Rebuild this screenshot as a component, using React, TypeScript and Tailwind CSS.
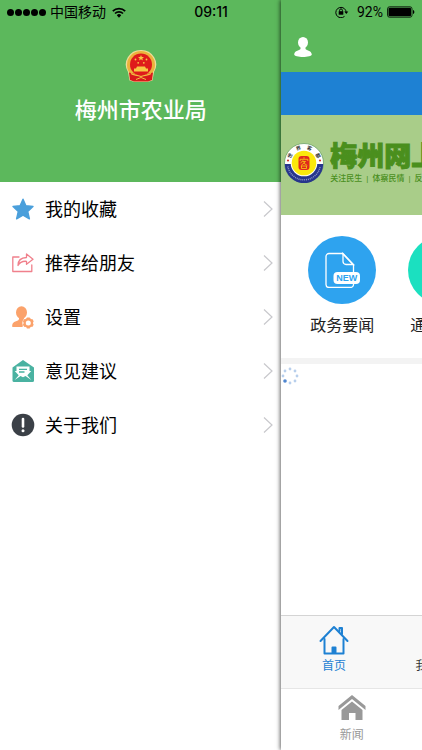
import type { ReactNode } from "react";

type MenuItem = {
  label: string;
  icon: ReactNode;
};

const StarIcon = () => (
  <svg viewBox="0 0 24 24" className="size-6" fill="#4a9fdb">
    <path
      d="M12 2.2l2.9 6.6 7.1.7-5.3 4.9 1.7 7.4-6.4-3.6-6.4 3.6 1.7-7.4L2 9.5l7.1-.7z"
      stroke="#4a9fdb"
      strokeWidth="1.4"
      strokeLinejoin="round"
    />
  </svg>
);

const ShareIcon = () => (
  <svg
    viewBox="0 0 24 24"
    className="size-6"
    fill="none"
    stroke="#f0808c"
    strokeWidth="1.3"
    strokeLinejoin="round"
    strokeLinecap="round"
  >
    <path d="M8 6H1.800v14.500h19V14" />
    <path d="M7 14.500c0-5 3-7.800 8.500-8V3l6.500 5.300-6.500 5v-3C11 10 8.500 11.500 7 14.500z" />
  </svg>
);

const UserSettingsIcon = () => (
  <svg viewBox="0 0 24 24" className="size-6">
    <g fill="#fba26b">
      <ellipse cx="10.5" cy="7.5" rx="5.5" ry="6.300" />
      <path d="M8 12h5v3l-1.500 7H1.300c-.6-3 .9-5 3.700-5.800 2-.6 3-1.400 3-2.200z" />
    </g>
    <circle cx="17.300" cy="18" r="6" fill="#fff" />
    <circle
      cx="17.300"
      cy="18"
      r="3.700"
      fill="none"
      stroke="#fba26b"
      strokeWidth="2.400"
    />
    <path
      d="M17.300 12.500v1.500M17.300 22v1.500M12.500 15.200l1.400.8M20.700 20l1.400.8M12.500 20.800l1.400-.8M20.700 16l1.400-.8"
      stroke="#fba26b"
      strokeWidth="3"
    />
  </svg>
);

const FeedbackIcon = () => (
  <svg viewBox="0 0 24 24" className="size-6">
    <path
      d="M12 1l11 7.500v13a1.500 1.500 0 0 1-1.500 1.500H3a1.500 1.500 0 0 1-1.500-1.500v-13z"
      fill="#4ab2a1"
    />
    <path
      d="M5.500 7.500h13V12h1.800l-4 4.300 4 4.700-5.800-4-2.500 1.300L9.500 17l-5.800 4 4-4.700-4-4.300h1.800z"
      fill="#fff"
    />
    <path d="M8 10.300h8M8 13h5.500" stroke="#4ab2a1" strokeWidth="1.300" />
  </svg>
);

const AboutIcon = () => (
  <svg viewBox="0 0 24 24" className="size-6">
    <circle cx="12" cy="12" r="11.300" fill="#3b4047" />
    <path
      d="M12 6v7.500"
      stroke="#fff"
      strokeWidth="2.600"
      strokeLinecap="round"
    />
    <circle cx="12" cy="17.800" r="1.500" fill="#fff" />
  </svg>
);

const ChevronIcon = () => (
  <svg
    viewBox="0 0 10 18"
    className="h-[18px] w-[10px]"
    fill="none"
    stroke="#c8c8cc"
    strokeWidth="1.2"
  >
    <path d="M1 1.500l8 7.500-8 7.500" />
  </svg>
);

const Emblem = () => (
  <svg viewBox="0 0 34 34" className="size-[34px]">
    <path
      d="M17 1a15 14.500 0 0 1 13 22l-1.500 8.500-5 1.500h-13l-5-1.500L4 23A15 14.500 0 0 1 17 1z"
      fill="#f0dc9a"
    />
    <circle cx="17" cy="16" r="14" fill="#ecb33c" />
    <path d="M5 23.500l8 2h8l8-2-1 7.500-4 1.500H10L6 31z" fill="#d8191b" />
    <circle cx="17" cy="15.500" r="11" fill="#df1b1b" />
    <path
      d="M17 6l.8 2 2.200.1-1.700 1.300.6 2.100-1.900-1.200-1.900 1.200.6-2.100L14 8.100l2.200-.1z"
      fill="#f7c744"
    />
    <g fill="#f7c744">
      <circle cx="11.500" cy="10.500" r=".9" />
      <circle cx="22.500" cy="10.500" r=".9" />
      <circle cx="14.200" cy="13.800" r=".9" />
      <circle cx="19.800" cy="13.800" r=".9" />
      <path d="M13 17.500h8l1 2h2V22.500H10v-3h2z" />
    </g>
    <path
      d="M7 24.500c3 2 5 1 10 3 5-2 7-1 10-3"
      stroke="#f3bd42"
      strokeWidth="1.300"
      fill="none"
    />
    <path d="M12 30.500l5-2 5 2" stroke="#f3bd42" strokeWidth="1" fill="none" />
  </svg>
);

const menu: MenuItem[] = [
  { label: "我的收藏", icon: <StarIcon /> },
  { label: "推荐给朋友", icon: <ShareIcon /> },
  { label: "设置", icon: <UserSettingsIcon /> },
  { label: "意见建议", icon: <FeedbackIcon /> },
  { label: "关于我们", icon: <AboutIcon /> },
];

const StatusBar = () => (
  <div className="absolute inset-x-0 top-0 z-20 grid h-6 grid-cols-3 items-center px-[7px] text-black">
    <div className="flex items-center">
      <div className="flex gap-[1px]">
        {[0, 1, 2, 3, 4].map((dot) => (
          <span key={dot} className="size-[7px] rounded-full bg-black" />
        ))}
      </div>
      <span className="ml-1 text-sm leading-6 whitespace-nowrap">中国移动</span>
      <svg
        viewBox="0 0 14 11"
        className="ml-[6px] h-[11px] w-[14px] shrink-0"
        fill="none"
        stroke="#000"
        strokeWidth="1.7"
      >
        <path d="M.8 4.100a8.800 8.800 0 0 1 12.400 0" />
        <path d="M3 6.500a5.700 5.700 0 0 1 8 0" />
        <path d="M4.800 8.200a3.100 3.100 0 0 1 4.400 0L7 10.700z" fill="#000" stroke="none" />
      </svg>
    </div>
    <span className="text-center font-[Inter,sans-serif] text-sm font-medium">
      09:11
    </span>
    <div className="flex items-center justify-end">
      <svg
        viewBox="0 0 14 12"
        className="h-3 w-[14px]"
        fill="none"
        stroke="#000"
        strokeWidth="1"
      >
        <path d="M9.500 10.400A5.200 5.200 0 1 1 11.200 6.500" />
        <path d="M9.300 5.500h4l-2 2.500z" fill="#000" stroke="none" />
        <path d="M4.600 5.500V4.300a1.400 1.400 0 0 1 2.800 0v1.200" />
        <rect x="3.700" y="5.200" width="4.600" height="3.500" fill="#000" stroke="none" />
      </svg>
      <span className="mr-1 ml-2 font-[Roboto,sans-serif] text-sm">92%</span>
      <svg viewBox="0 0 28 12" className="h-3 w-7">
        <rect x=".5" y=".8" width="24.500" height="10.400" rx="2" fill="none" stroke="#000" strokeWidth=".8" />
        <rect x="1.500" y="1.800" width="22.500" height="8.400" rx="1" fill="#000" />
        <path d="M26 4c1.800.5 1.800 3.500 0 4z" fill="#000" />
      </svg>
    </div>
  </div>
);

const Sidebar = () => (
  <aside className="w-2/3 shrink-0 bg-white">
    <header className="flex h-[182px] flex-col items-center bg-[#5cb85c] pt-[49px]">
      <Emblem />
      <h1 className="mt-[10px] text-[22px] leading-9 font-medium text-white">
        梅州市农业局
      </h1>
    </header>
    <nav>
      {menu.map((item) => (
        <button
          key={item.label}
          type="button"
          className="flex h-[54px] w-full items-center pr-2 pl-[11px] text-left"
        >
          {item.icon}
          <span className="ml-[10px] flex-1 pt-px text-lg text-black">
            {item.label}
          </span>
          <ChevronIcon />
        </button>
      ))}
    </nav>
  </aside>
);

const BannerLogo = () => (
  <svg viewBox="0 0 40 40" className="size-10 shrink-0">
    <defs>
      <path id="ring-top" d="M6 20a14 14 0 0 1 28 0" />
    </defs>
    <circle cx="20" cy="20" r="19.500" fill="#fff" stroke="#5f9a5a" strokeWidth=".7" />
    <path d="M.8 21a19.200 19.200 0 0 0 38.400 0z" fill="#27358c" />
    <path
      d="M3.800 23.500a16.500 16.500 0 0 0 32.400 0"
      fill="none"
      stroke="#8d97c9"
      strokeWidth="1.5"
      strokeDasharray="1 .9"
    />
    <circle cx="20" cy="20" r="13.300" fill="#fff" />
    <circle cx="20" cy="20" r="12.300" fill="#fbe80c" />
    <text fontSize="5" fontWeight="700" fill="#333">
      <textPath href="#ring-top" startOffset="50%" textAnchor="middle">
        世　界　客　都
      </textPath>
    </text>
    <circle cx="4" cy="17.500" r="1.100" fill="#d8302a" />
    <circle cx="36" cy="17.500" r="1.100" fill="#d8302a" />
    <rect x="14.500" y="13" width="11" height="14" rx="3" fill="#e0281e" />
    <path
      d="M20 14.200v1.600M16.200 18v-1.700h7.600V18M19 17.300l-2.500 3M18.500 18.500h3l-4.700 4.300M19.500 20l3.800 2.500M17.500 23h5v2.500h-5z"
      fill="none"
      stroke="#fbe80c"
      strokeWidth=".7"
    />
  </svg>
);

const NewsIcon = () => (
  <svg viewBox="0 0 36 36" className="size-9" fill="none" stroke="#fff" strokeWidth="1.3">
    <path d="M18.500 1.500H5a3 3 0 0 0-3 3v28a3 3 0 0 0 3 3h21.500a3 3 0 0 0 3-3V13z" />
    <path d="M19 1.500v8a3 3 0 0 0 3 3h7.500z" />
    <rect x="9.500" y="20" width="26.500" height="12" rx="4" fill="#fff" stroke="none" />
    <text
      x="22.800"
      y="29"
      textAnchor="middle"
      fontFamily="Liberation Sans, sans-serif"
      fontSize="9"
      fontWeight="700"
      fill="#2ea3ef"
      stroke="none"
    >
      NEW
    </text>
  </svg>
);

const Spinner = () => (
  <svg viewBox="0 0 18 18" className="size-[18px]" fill="#b8cfec">
    <circle cx="9" cy="2" r="1.400" />
    <circle cx="14" cy="4" r="1.400" />
    <circle cx="16" cy="9" r="1.400" />
    <circle cx="14" cy="14" r="1.400" />
    <circle cx="9" cy="16" r="1.400" />
    <circle cx="4" cy="14" r="1.800" fill="#4f86d0" />
    <circle cx="2" cy="9" r="1.400" />
    <circle cx="4" cy="4" r="1.400" />
  </svg>
);

const HomePage = () => (
  <main className="relative z-10 flex w-screen shrink-0 flex-col bg-white shadow-[-1px_0_4px_rgba(0,0,0,0.6)]">
    <header className="flex h-[72px] items-end bg-[#5cb85c] px-3 pb-[14px]">
      <button type="button" aria-label="用户">
        <svg viewBox="0 0 20 22" className="h-[22px] w-5" fill="#fff">
          <ellipse cx="10" cy="6.500" rx="5" ry="5.500" />
          <path d="M7.500 10h5v3c0 1 6.300 1.500 6.300 5.500 0 3.300-17.600 3.300-17.600 0 0-4 6.300-4.500 6.300-5.500z" />
        </svg>
      </button>
    </header>
    <div className="h-[43px] bg-[#1e81d3]" />
    <section className="flex h-[100px] items-center gap-[6px] bg-[#a9cd89] px-[3px] pb-1">
      <BannerLogo />
      <div className="whitespace-nowrap text-[#4a8f1d]">
        <p className="text-[27px] leading-8 font-black [-webkit-text-stroke:1px_#4a8f1d]">
          梅州网上
        </p>
        <p className="flex gap-1 text-[8px] leading-3 font-medium">
          <span>关注民生</span>
          <span>|</span>
          <span>体察民情</span>
          <span>|</span>
          <span>反映民意</span>
        </p>
      </div>
    </section>
    <section className="grid h-[143px] grid-cols-4 content-start px-[11px] pt-[21px]">
      <a href="#news" className="flex flex-col items-center gap-[10px]">
        <span className="flex size-[68px] items-center justify-center rounded-full bg-[#2ea3ef]">
          <NewsIcon />
        </span>
        <span className="text-base whitespace-nowrap text-[#222]">政务要闻</span>
      </a>
      <a href="#notice" className="flex flex-col items-center gap-[10px]">
        <span className="size-[68px] rounded-full bg-[#1be0c0]" />
        <span className="text-base whitespace-nowrap text-[#222]">通知公告</span>
      </a>
    </section>
    <div className="h-[6px] bg-[#f3f3f3]" />
    <div className="flex-1 pt-[3px]">
      <Spinner />
    </div>
    <nav className="grid h-[73px] grid-cols-4 border-t border-[#d4d4d4] bg-[#f8f8f8] pt-2 text-xs">
      <a href="#home" className="flex flex-col items-center gap-[2px] text-[#1e81d3]">
        <svg
          viewBox="0 0 30 32"
          className="h-8 w-[30px]"
          fill="none"
          stroke="currentColor"
          strokeWidth="2"
          strokeLinejoin="round"
          strokeLinecap="round"
        >
          <path d="M1.500 17L15 3l13.500 14" />
          <path d="M5.500 15v14.500h19V15" />
          <path d="M20.500 7V4h2.500v6" />
          <path d="M13.500 28.500v-5h3v5z" fill="currentColor" />
        </svg>
        <span>首页</span>
      </a>
      <a href="#mine" className="flex flex-col items-center justify-end pb-[14px] text-[#333]">
        <span>我的收藏</span>
      </a>
    </nav>
    <nav className="grid h-[62px] grid-cols-3 border-t border-[#e6e6e6] bg-white pt-1 text-xs">
      <a href="#list" className="flex flex-col items-center gap-[6px] text-[#999]">
        <svg viewBox="0 0 28 28" className="size-7" fill="currentColor">
          <path d="M14 2l13.500 11v4L14 6 .5 17v-4z" />
          <path d="M14 8.500L24.500 17v10h-7v-7h-6.500v7H3.500V17z" />
        </svg>
        <span>新闻</span>
      </a>
    </nav>
  </main>
);

export default function App() {
  return (
    <div
      lang="zh-CN"
      className="relative flex min-h-screen overflow-hidden bg-white font-['Liberation_Sans','Noto_Sans_CJK_SC',sans-serif]"
    >
      <StatusBar />
      <Sidebar />
      <HomePage />
    </div>
  );
}
